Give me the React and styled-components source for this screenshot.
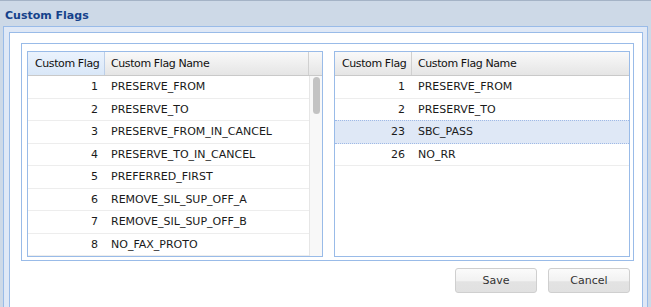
import React from 'react';
import styled, { createGlobalStyle } from 'styled-components';

const GlobalStyle = createGlobalStyle`
  html, body {
    margin: 0;
    padding: 0;
    background: #cdd9e7;
  }
  * {
    box-sizing: border-box;
  }
`;

const Window = styled.div`
  width: 651px;
  height: 307px;
  display: flex;
  flex-direction: column;
  overflow: hidden;
  background: #cdd9e7;
  border-top: 1px solid #a4b3c6;
  font-family: "DejaVu Sans", Tahoma, Verdana, sans-serif;
  font-size: 11px;
  color: #1a1a1a;
`;

const TitleBar = styled.div`
  height: 25px;
  flex: none;
  display: flex;
  align-items: center;
  padding: 3px 0 0 5px;
  font-weight: bold;
  color: #15428b;
`;

const WindowBody = styled.div`
  flex: 1;
  margin: 0 3px 0 3px;
  padding: 5px 4px 0 5px;
  background: #dfe8f6;
  border: 1px solid #99bbe8;
  border-bottom: none;
  display: flex;
`;

const Panel = styled.div`
  flex: 1;
  background: #fff;
  border: 1px solid #99bbe8;
  border-bottom: none;
  padding: 10px 8px 0 11px;
`;

const FieldBox = styled.div`
  display: flex;
  gap: 11px;
  border: 1px solid #99bbe8;
  padding: 7px 3px 3px 5px;
`;

const Grid = styled.div`
  width: 296px;
  height: 206px;
  border: 1px solid #99bbe8;
  display: flex;
  flex-direction: column;
  overflow: hidden;
  background: #fff;
`;

const HeaderRow = styled.div`
  display: flex;
  height: 24px;
  flex: none;
  border-bottom: 1px solid #c9c9c9;
`;

const HeaderCell = styled.div`
  width: ${p => p.$width}px;
  flex: ${p => (p.$grow ? 1 : 'none')};
  display: flex;
  align-items: center;
  padding: 0 4px 0 ${p => p.$pad ?? 7}px;
  letter-spacing: -0.4px;
  white-space: nowrap;
  overflow: hidden;
  color: #111;
  background: ${p =>
    p.$active
      ? 'linear-gradient(#ebf3fd, #d9e7f8)'
      : 'linear-gradient(#f9f9f9, #e5e5e5)'};
  border-right: ${p => (p.$last ? 'none' : `1px solid ${p.$active ? '#bccfe9' : '#d0d0d0'}`)};
`;

const BodyArea = styled.div`
  flex: 1;
  display: flex;
  min-height: 0;
`;

const Rows = styled.div`
  flex: 1;
  display: flex;
  flex-direction: column;
`;

const Row = styled.div`
  display: flex;
  height: ${p => (p.$selected ? 23.5 : 22.5)}px;
  flex: none;
  margin-top: ${p => (p.$selected ? -1 : 0)}px;
  background: ${p => (p.$selected ? '#dfe8f6' : '#fff')};
  border-top: ${p => (p.$selected ? '1px dotted #9fb9e6' : 'none')};
  border-bottom: ${p => (p.$selected ? '1px dotted #9fb9e6' : '1px solid #ededed')};
`;

const NumCell = styled.div`
  width: 77px;
  flex: none;
  display: flex;
  align-items: center;
  justify-content: flex-end;
  padding-right: 7px;
`;

const NameCell = styled.div`
  flex: 1;
  display: flex;
  align-items: center;
  padding-left: 6px;
  white-space: nowrap;
`;

const Scroller = styled.div`
  width: 13px;
  flex: none;
  background: #f8f8f8;
  border-left: 1px solid #e6e6e6;
  padding: 1px 0 0 3px;
`;

const Thumb = styled.div`
  width: 7px;
  height: 37px;
  border-radius: 4px;
  background: #c3c3c3;
`;

const ButtonBar = styled.div`
  display: flex;
  justify-content: flex-end;
  gap: 11px;
  margin-top: 7px;
  padding-right: 4px;
`;

const Button = styled.button`
  width: 82px;
  height: 25px;
  border: 1px solid #cfcfcf;
  border-radius: 3px;
  background: linear-gradient(#fbfbfb 0%, #f2f2f2 50%, #e3e3e3 56%, #e1e1e1 100%);
  font-family: inherit;
  font-size: 11px;
  color: #333;
  padding: 0;
`;

const leftFlags = [
  [1, 'PRESERVE_FROM'],
  [2, 'PRESERVE_TO'],
  [3, 'PRESERVE_FROM_IN_CANCEL'],
  [4, 'PRESERVE_TO_IN_CANCEL'],
  [5, 'PREFERRED_FIRST'],
  [6, 'REMOVE_SIL_SUP_OFF_A'],
  [7, 'REMOVE_SIL_SUP_OFF_B'],
  [8, 'NO_FAX_PROTO'],
];

const rightFlags = [
  [1, 'PRESERVE_FROM'],
  [2, 'PRESERVE_TO'],
  [23, 'SBC_PASS'],
  [26, 'NO_RR'],
];

function FlagGrid({ rows, selected, scroll, activeHeader }) {
  return (
    <Grid>
      <HeaderRow>
        <HeaderCell $width={77} $active={activeHeader}>Custom Flag</HeaderCell>
        <HeaderCell $grow $pad={6} $last={!scroll}>Custom Flag Name</HeaderCell>
        {scroll && <HeaderCell $width={13} $last />}
      </HeaderRow>
      <BodyArea>
        <Rows>
          {rows.map(([id, name]) => (
            <Row key={id} $selected={id === selected}>
              <NumCell>{id}</NumCell>
              <NameCell>{name}</NameCell>
            </Row>
          ))}
        </Rows>
        {scroll && (
          <Scroller>
            <Thumb />
          </Scroller>
        )}
      </BodyArea>
    </Grid>
  );
}

export default function App() {
  return (
    <>
      <GlobalStyle />
      <Window>
        <TitleBar>Custom Flags</TitleBar>
        <WindowBody>
          <Panel>
            <FieldBox>
              <FlagGrid rows={leftFlags} scroll activeHeader />
              <FlagGrid rows={rightFlags} selected={23} />
            </FieldBox>
            <ButtonBar>
              <Button>Save</Button>
              <Button>Cancel</Button>
            </ButtonBar>
          </Panel>
        </WindowBody>
      </Window>
    </>
  );
}
